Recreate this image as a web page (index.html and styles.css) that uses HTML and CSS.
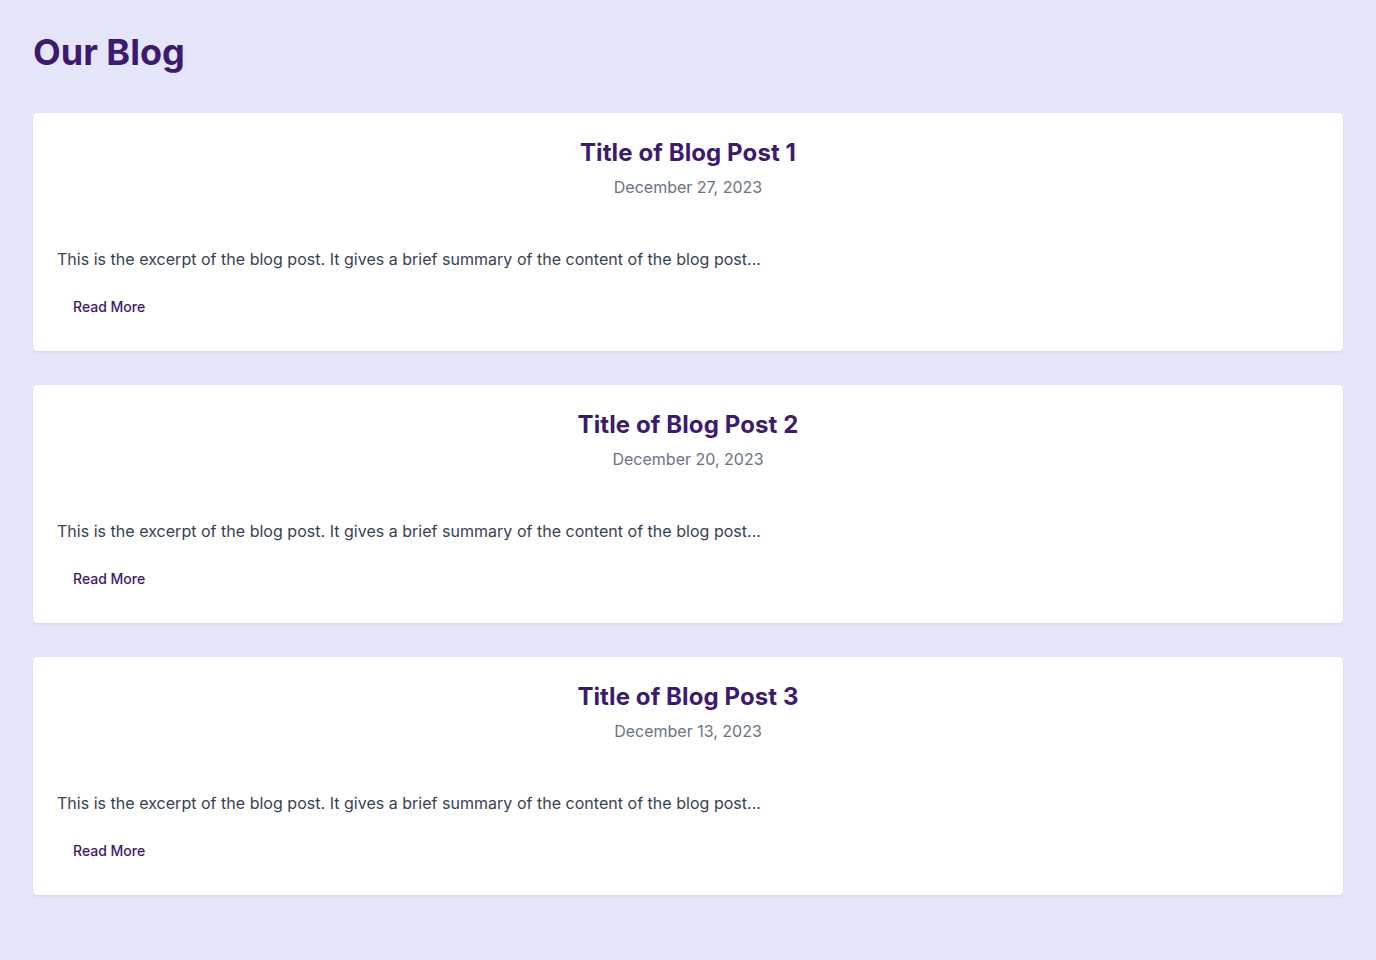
FILE: index.html
```html
<!DOCTYPE html>
<html lang="en">
<head>
<meta charset="utf-8">
<title>Our Blog</title>
<link rel="stylesheet" href="styles.css">
</head>
<body>
<main class="page">
  <h1 class="page-title">Our Blog</h1>
  <div class="posts">
    <article class="card">
      <header class="card-head">
        <h2 class="card-title">Title of Blog Post 1</h2>
        <p class="card-date">December 27, 2023</p>
      </header>
      <p class="card-excerpt">This is the excerpt of the blog post. It gives a brief summary of the content of the blog post...</p>
      <div class="card-actions"><button class="read-more">Read More</button></div>
    </article>
    <article class="card">
      <header class="card-head">
        <h2 class="card-title">Title of Blog Post 2</h2>
        <p class="card-date">December 20, 2023</p>
      </header>
      <p class="card-excerpt">This is the excerpt of the blog post. It gives a brief summary of the content of the blog post...</p>
      <div class="card-actions"><button class="read-more">Read More</button></div>
    </article>
    <article class="card">
      <header class="card-head">
        <h2 class="card-title">Title of Blog Post 3</h2>
        <p class="card-date">December 13, 2023</p>
      </header>
      <p class="card-excerpt">This is the excerpt of the blog post. It gives a brief summary of the content of the blog post...</p>
      <div class="card-actions"><button class="read-more">Read More</button></div>
    </article>
  </div>
</main>
</body>
</html>
```

FILE: styles.css
```css
* { box-sizing: border-box; }
html, body {
  margin: 0;
  padding: 0;
  background: #e6e6fa;
  font-family: Inter, "Noto Sans", sans-serif;
}
.page {
  padding: 32px 33px 64px;
}
.page-title {
  margin: 0 0 41px;
  font-size: 36px;
  line-height: 40px;
  font-weight: 700;
  color: #3b1a6f;
}
.posts {
  display: flex;
  flex-direction: column;
  gap: 34px;
}
.card {
  background: #fff;
  border-radius: 4px;
  box-shadow: 0 1px 3px rgba(60, 40, 120, 0.12);
  padding: 24px 24px 26px 24px;
}
.card-head {
  text-align: center;
  margin-bottom: 48px;
}
.card-title {
  margin: 0;
  font-size: 24px;
  line-height: 32px;
  font-weight: 700;
  letter-spacing: 0.1px;
  color: #3b1a6f;
}
.card-date {
  margin: 6px 0 0;
  font-size: 16px;
  line-height: 24px;
  color: #6b7280;
}
.card-excerpt {
  margin: 0;
  font-size: 16px;
  line-height: 24px;
  letter-spacing: 0.02px;
  color: #374151;
}
.card-actions {
  margin-top: 18px;
}
.read-more {
  background: transparent;
  border: 0;
  padding: 8px 16px;
  font-family: inherit;
  font-size: 14px;
  line-height: 20px;
  font-weight: 500;
  color: #3b1a6f;
  cursor: pointer;
}
```
